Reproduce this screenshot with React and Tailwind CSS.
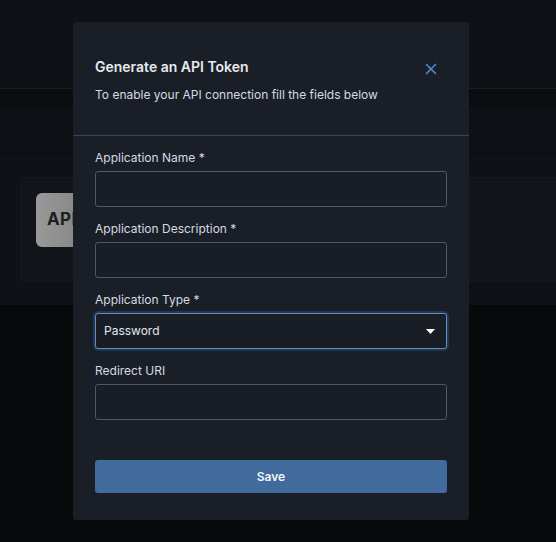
import { X } from 'lucide-react';

const Field = ({ label, children }) => (
  <div className="mb-[14px]">
    <label className="block text-[12px] leading-[16px] text-[#d5dae1] mb-[5px]">{label}</label>
    {children}
  </div>
);

const TextInput = () => (
  <input
    type="text"
    className="block w-full h-[36px] rounded-[3px] border border-[#4a5a6c] bg-[#191e26] px-2 text-[12px] text-[#d5dae1] outline-none"
  />
);

export default function App() {
  return (
    <div
      className="relative w-[556px] h-[542px] overflow-hidden bg-[#08090b]"
      style={{ fontFamily: 'Inter, "Noto Sans", sans-serif' }}
    >
      {/* page behind the overlay */}
      <div className="h-[89px] bg-[#0e1116] border-b border-[#191c21]" />
      <div className="h-[18px] bg-[#0a0c0f]" />
      <div className="h-[48px] bg-[#0d1014] border-b border-[#0a0c0f]" />
      <div className="h-[150px] bg-[#0e1115] pt-[22px] pl-[21px]">
        <div className="h-[105px] rounded-l-[4px] border border-r-0 border-[#171a1f] bg-[#111419] pt-[15px] pl-[14px]">
          <div className="w-[60px] h-[54px] rounded-[6px] bg-gradient-to-r from-[#999] to-[#808080] flex items-center pl-[11px]">
            <span className="text-[17px] font-bold tracking-wide text-[#1c1e21]">API</span>
          </div>
        </div>
      </div>

      {/* modal */}
      <div className="absolute left-[73px] top-[22px] w-[396px] h-[498px] rounded-[3px] bg-[#1a1f27]">
        <div className="relative px-[22px] pt-[35px] pb-[32px] border-b border-[#3a4656]">
          <h2 className="text-[14px] leading-[20px] font-semibold text-[#e6e9ee]">Generate an API Token</h2>
          <p className="mt-[10px] text-[12px] leading-[16px] text-[#d5dae1]">
            To enable your API connection fill the fields below
          </p>
          <button className="absolute right-[29px] top-[38px] text-[#4f8ad0]">
            <X size={18} strokeWidth={2.2} />
          </button>
        </div>

        <div className="px-[22px] pt-[14px]">
          <Field label="Application Name *">
            <TextInput />
          </Field>
          <Field label="Application Description *">
            <TextInput />
          </Field>
          <Field label="Application Type *">
            <div className="relative h-[36px] rounded-[3px] border border-[#5b8fd2] bg-[#191e26] shadow-[0_0_0_2px_#25364a] flex items-center px-[8px]">
              <span className="text-[12px] text-[#e3e7ec]">Password</span>
              <svg className="absolute right-[11px] top-[15px]" width="9" height="5" viewBox="0 0 9 5">
                <path d="M0 0 H9 L4.5 5 Z" fill="#ffffff" />
              </svg>
            </div>
          </Field>
          <Field label="Redirect URI">
            <TextInput />
          </Field>
          <button className="mt-[26px] w-full h-[33px] rounded-[3px] bg-[#416b9c] text-[12px] font-semibold text-[#f2f5f9]">
            Save
          </button>
        </div>
      </div>
    </div>
  );
}
